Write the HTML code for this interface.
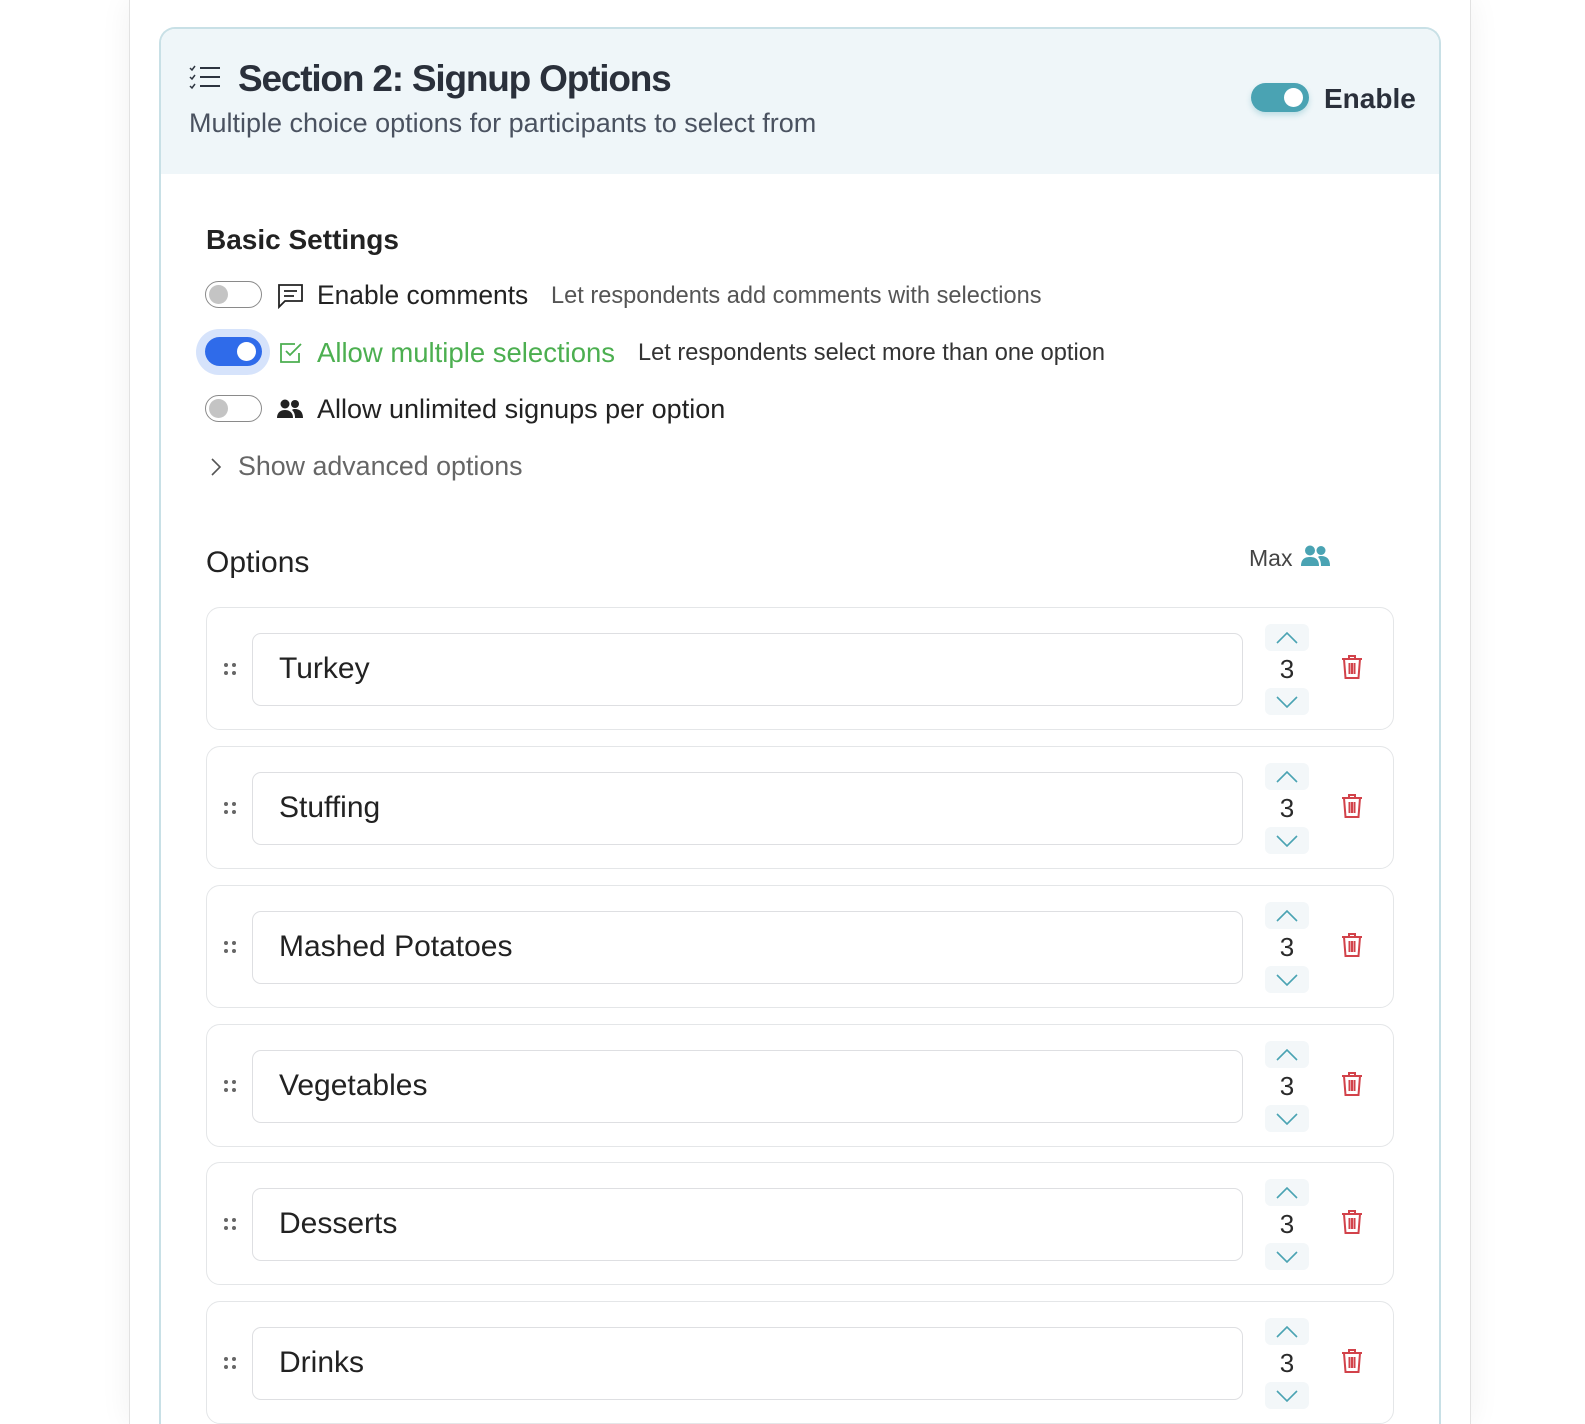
<!DOCTYPE html>
<html><head><meta charset="utf-8"><style>
*{box-sizing:border-box;margin:0;padding:0}
html,body{width:1585px;height:1424px;overflow:hidden}
body{background:#fff;font-family:"Liberation Sans",sans-serif;position:relative;color:#1f2328}
.wrap{position:absolute;left:129px;top:0;width:1342px;height:1424px;background:#fff;border-left:1px solid #e2e2e2;border-right:1px solid #e2e2e2;box-shadow:0 0 30px rgba(0,0,0,.06)}
.card{position:absolute;left:159px;top:27px;width:1282px;height:1397px;border:2px solid #c8e0e6;border-bottom:none;border-radius:16px 16px 0 0;background:#fff;overflow:hidden}
.hdr{position:absolute;left:0;top:0;right:0;height:145px;background:#eff6f9}
.a{position:absolute;white-space:nowrap}
.tg{position:absolute;width:57px;height:27px;border-radius:14px;border:1.5px solid #8a8a8a;background:#fff}
.tg i{position:absolute;left:3px;top:3px;width:19px;height:19px;border-radius:50%;background:#c4c4c4}
.row{position:absolute;left:206px;width:1188px;height:123px;border:1.5px solid #e4e6e8;border-radius:14px;background:#fff}
.inp{position:absolute;left:45px;top:25px;width:991px;height:73px;border:1.5px solid #dedfe2;border-radius:9px;font-size:30px;color:#222;padding-left:26px;line-height:70px}
.dots{position:absolute;left:16px;top:54px}
.st{position:absolute;left:1058px;top:16px;width:44px}
.st .b{width:44px;height:27px;background:#f3f7f9;border-radius:6px;display:flex;align-items:center;justify-content:center}
.st .n{height:37px;text-align:center;font-size:26px;line-height:37px;color:#2a2a2a}
.tr{position:absolute;left:1134px;top:46px}
</style></head><body>
<div class="wrap"></div>
<div class="card">
<div class="hdr"></div>
</div>
<!-- header -->
<svg class="a" style="left:189px;top:64px" width="32" height="26" viewBox="0 0 32 26" fill="none" stroke="#2d3440" stroke-width="2"><path d="M11 4h20M11 13h20M11 22h20"/><path d="M1 4l2 2 3-4M1 13l2 2 3-4M1 22l2 2 3-4" stroke-width="1.5"/></svg>
<div class="a" style="left:238px;top:58px;font-size:37px;font-weight:bold;color:#2a303b;letter-spacing:-1.2px">Section 2: Signup Options</div>
<div class="a" style="left:189px;top:108px;font-size:27px;color:#4a5260">Multiple choice options for participants to select from</div>
<div class="a" style="left:1251px;top:83px;width:58px;height:29px;border-radius:15px;background:#4aa3b3;box-shadow:0 3px 6px rgba(74,163,179,.3)"><i style="position:absolute;right:6px;top:5px;width:19px;height:19px;border-radius:50%;background:#fff"></i></div>
<div class="a" style="left:1324px;top:83px;font-size:28px;font-weight:bold;color:#2a303b">Enable</div>
<!-- basic settings -->
<div class="a" style="left:206px;top:224px;font-size:28px;font-weight:bold;color:#222">Basic Settings</div>
<div class="tg" style="left:205px;top:281px"><i></i></div>
<svg class="a" style="left:277px;top:283px" width="27" height="26" viewBox="0 0 27 26" fill="none" stroke="#222" stroke-width="1.8"><path d="M2 2h23v16H8l-6 6z"/><path d="M7 8h13M7 13h10"/></svg>
<div class="a" style="left:317px;top:280px;font-size:26.4px;color:#222">Enable comments</div>
<div class="a" style="left:551px;top:283px;font-size:23.6px;color:#555">Let respondents add comments with selections</div>
<div class="a" style="left:196px;top:329px;width:74px;height:46px;border-radius:23px;background:#d6e3fb"></div>
<div class="a" style="left:205px;top:337px;width:57px;height:29px;border-radius:15px;background:#2f6bea"><i style="position:absolute;right:6px;top:5px;width:19px;height:19px;border-radius:50%;background:#fff"></i></div>
<svg class="a" style="left:279px;top:341px" width="25" height="24" viewBox="0 0 25 24" fill="none" stroke="#4caf50" stroke-width="1.8"><path d="M20 12v9H2V3h14"/><path d="M7 10l4 4 11-11"/></svg>
<div class="a" style="left:317px;top:337px;font-size:27.5px;color:#4caf50">Allow multiple selections</div>
<div class="a" style="left:638px;top:340px;font-size:23.6px;color:#333">Let respondents select more than one option</div>
<div class="tg" style="left:205px;top:395px"><i></i></div>
<svg class="a" style="left:277px;top:399px" width="26" height="20" viewBox="0 0 26 20" fill="#222"><circle cx="8" cy="5" r="4.5"/><circle cx="18" cy="5" r="4"/><path d="M0 19c0-6 4-8 8-8s8 2 8 8z"/><path d="M15 11c1-1 2-1 3-1 5 0 8 3 8 9h-8c0-4-1-6-3-8z"/></svg>
<div class="a" style="left:317px;top:394px;font-size:27px;color:#222">Allow unlimited signups per option</div>
<svg class="a" style="left:210px;top:457px" width="12" height="20" viewBox="0 0 12 20" fill="none" stroke="#555" stroke-width="1.6"><path d="M2 2l8 8-8 8"/></svg>
<div class="a" style="left:238px;top:451px;font-size:26.8px;color:#666">Show advanced options</div>
<!-- options -->
<div class="a" style="left:206px;top:546px;font-size:30px;color:#222">Options</div>
<div class="a" style="left:1249px;top:545px;font-size:23px;color:#444">Max</div>
<svg class="a" style="left:1301px;top:545px" width="29" height="22" viewBox="0 0 29 22" fill="#4aa3b3"><circle cx="9" cy="5.5" r="5"/><circle cx="20" cy="5.5" r="4.5"/><path d="M0 21c0-7 4-9 9-9s9 2 9 9z"/><path d="M17 12c1-1 2-1 3-1 6 0 9 3 9 10h-9c0-4-1-7-3-9z"/></svg>

<div class="row" style="top:607px"><svg class="dots" width="14" height="14"><g fill="#666"><circle cx="3" cy="3" r="2"/><circle cx="11" cy="3" r="2"/><circle cx="3" cy="11" r="2"/><circle cx="11" cy="11" r="2"/></g></svg><div class="inp">Turkey</div><div class="st"><div class="b"><svg width="22" height="12" fill="none" stroke="#4aa3b3" stroke-width="1.6"><path d="M1 11L11 1l10 10"/></svg></div><div class="n">3</div><div class="b"><svg width="22" height="12" fill="none" stroke="#4aa3b3" stroke-width="1.6"><path d="M1 1l10 10L21 1"/></svg></div></div><svg class="tr" width="22" height="26" viewBox="0 0 22 26" fill="none" stroke="#d2424a" stroke-width="2"><path d="M1 5h20M8 5V2h6v3M3 5l1.5 19h13L19 5M8.5 9v11M11 9v11M13.5 9v11"/></svg></div>
<div class="row" style="top:746px"><svg class="dots" width="14" height="14"><g fill="#666"><circle cx="3" cy="3" r="2"/><circle cx="11" cy="3" r="2"/><circle cx="3" cy="11" r="2"/><circle cx="11" cy="11" r="2"/></g></svg><div class="inp">Stuffing</div><div class="st"><div class="b"><svg width="22" height="12" fill="none" stroke="#4aa3b3" stroke-width="1.6"><path d="M1 11L11 1l10 10"/></svg></div><div class="n">3</div><div class="b"><svg width="22" height="12" fill="none" stroke="#4aa3b3" stroke-width="1.6"><path d="M1 1l10 10L21 1"/></svg></div></div><svg class="tr" width="22" height="26" viewBox="0 0 22 26" fill="none" stroke="#d2424a" stroke-width="2"><path d="M1 5h20M8 5V2h6v3M3 5l1.5 19h13L19 5M8.5 9v11M11 9v11M13.5 9v11"/></svg></div>
<div class="row" style="top:885px"><svg class="dots" width="14" height="14"><g fill="#666"><circle cx="3" cy="3" r="2"/><circle cx="11" cy="3" r="2"/><circle cx="3" cy="11" r="2"/><circle cx="11" cy="11" r="2"/></g></svg><div class="inp">Mashed Potatoes</div><div class="st"><div class="b"><svg width="22" height="12" fill="none" stroke="#4aa3b3" stroke-width="1.6"><path d="M1 11L11 1l10 10"/></svg></div><div class="n">3</div><div class="b"><svg width="22" height="12" fill="none" stroke="#4aa3b3" stroke-width="1.6"><path d="M1 1l10 10L21 1"/></svg></div></div><svg class="tr" width="22" height="26" viewBox="0 0 22 26" fill="none" stroke="#d2424a" stroke-width="2"><path d="M1 5h20M8 5V2h6v3M3 5l1.5 19h13L19 5M8.5 9v11M11 9v11M13.5 9v11"/></svg></div>
<div class="row" style="top:1024px"><svg class="dots" width="14" height="14"><g fill="#666"><circle cx="3" cy="3" r="2"/><circle cx="11" cy="3" r="2"/><circle cx="3" cy="11" r="2"/><circle cx="11" cy="11" r="2"/></g></svg><div class="inp">Vegetables</div><div class="st"><div class="b"><svg width="22" height="12" fill="none" stroke="#4aa3b3" stroke-width="1.6"><path d="M1 11L11 1l10 10"/></svg></div><div class="n">3</div><div class="b"><svg width="22" height="12" fill="none" stroke="#4aa3b3" stroke-width="1.6"><path d="M1 1l10 10L21 1"/></svg></div></div><svg class="tr" width="22" height="26" viewBox="0 0 22 26" fill="none" stroke="#d2424a" stroke-width="2"><path d="M1 5h20M8 5V2h6v3M3 5l1.5 19h13L19 5M8.5 9v11M11 9v11M13.5 9v11"/></svg></div>
<div class="row" style="top:1162px"><svg class="dots" width="14" height="14"><g fill="#666"><circle cx="3" cy="3" r="2"/><circle cx="11" cy="3" r="2"/><circle cx="3" cy="11" r="2"/><circle cx="11" cy="11" r="2"/></g></svg><div class="inp">Desserts</div><div class="st"><div class="b"><svg width="22" height="12" fill="none" stroke="#4aa3b3" stroke-width="1.6"><path d="M1 11L11 1l10 10"/></svg></div><div class="n">3</div><div class="b"><svg width="22" height="12" fill="none" stroke="#4aa3b3" stroke-width="1.6"><path d="M1 1l10 10L21 1"/></svg></div></div><svg class="tr" width="22" height="26" viewBox="0 0 22 26" fill="none" stroke="#d2424a" stroke-width="2"><path d="M1 5h20M8 5V2h6v3M3 5l1.5 19h13L19 5M8.5 9v11M11 9v11M13.5 9v11"/></svg></div>
<div class="row" style="top:1301px;height:123px"><svg class="dots" width="14" height="14"><g fill="#666"><circle cx="3" cy="3" r="2"/><circle cx="11" cy="3" r="2"/><circle cx="3" cy="11" r="2"/><circle cx="11" cy="11" r="2"/></g></svg><div class="inp">Drinks</div><div class="st"><div class="b"><svg width="22" height="12" fill="none" stroke="#4aa3b3" stroke-width="1.6"><path d="M1 11L11 1l10 10"/></svg></div><div class="n">3</div><div class="b"><svg width="22" height="12" fill="none" stroke="#4aa3b3" stroke-width="1.6"><path d="M1 1l10 10L21 1"/></svg></div></div><svg class="tr" width="22" height="26" viewBox="0 0 22 26" fill="none" stroke="#d2424a" stroke-width="2"><path d="M1 5h20M8 5V2h6v3M3 5l1.5 19h13L19 5M8.5 9v11M11 9v11M13.5 9v11"/></svg></div>
</body></html>
